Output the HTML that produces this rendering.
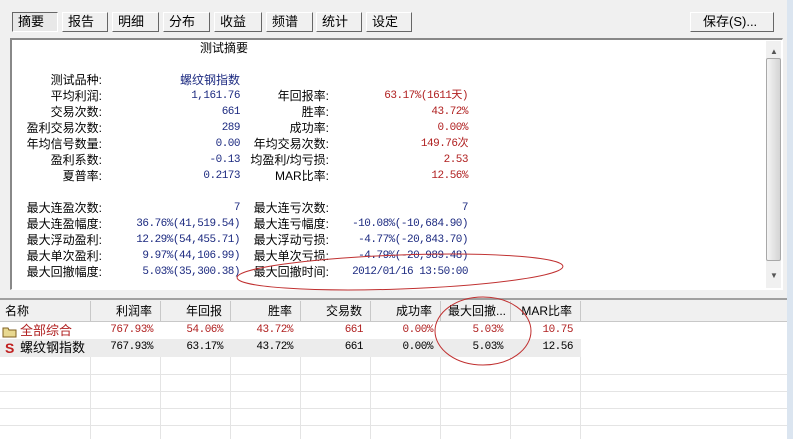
<!DOCTYPE html>
<html><head><meta charset="utf-8"><style>
*{margin:0;padding:0;box-sizing:border-box}
body{width:793px;height:439px;overflow:hidden;background:#f0f0f0;font-family:"Liberation Sans","Noto Sans CJK SC",sans-serif;font-size:12px;position:relative;color:#000}
.a{position:absolute;white-space:nowrap;line-height:16px}
.btn{position:absolute;top:12px;height:20px;background:#f0f0f0;border:1px solid;border-color:#fff #666 #666 #fff;text-align:left;padding-left:5px;line-height:17px;font-size:13px}
.lbl{position:absolute;text-align:right;white-space:nowrap;line-height:16px}
.n{font-family:"Liberation Mono","Noto Sans CJK SC",monospace;font-size:11px;letter-spacing:-0.5px;line-height:16px}
.b{color:#1c2a80}.r{color:#b02020}
.th{position:absolute;top:301px;height:20px;line-height:20px;text-align:right;padding-right:8px;border-right:1px solid #c8c8c8}
.td{position:absolute;height:17px;line-height:17px;text-align:right;padding-right:8px;font-family:"Liberation Mono","Noto Sans CJK SC",monospace;font-size:11px;letter-spacing:-0.5px}
</style></head><body>
<div class="btn" style="left:12px;width:46px;border-color:#666 #fff #fff #666;background:#e8e8e8">摘要</div>
<div class="btn" style="left:62px;width:46px">报告</div>
<div class="btn" style="left:112px;width:47px">明细</div>
<div class="btn" style="left:163px;width:47px">分布</div>
<div class="btn" style="left:214px;width:48px">收益</div>
<div class="btn" style="left:266px;width:47px">频谱</div>
<div class="btn" style="left:316px;width:46px">统计</div>
<div class="btn" style="left:366px;width:46px">设定</div>
<div class="btn" style="left:690px;width:84px;padding-left:12px">保存(S)...</div>
<div style="position:absolute;left:787px;top:0;width:6px;height:439px;background:#dbe5f0"></div>
<div style="position:absolute;left:10px;top:38px;width:773px;height:252px;background:#fff;border:1px solid;border-color:#888 #fff #fff #888;border-width:2px 1px 1px 2px"></div>
<div style="position:absolute;left:766px;top:41px;width:15px;height:247px;background:#f0f0f0"></div>
<div style="position:absolute;left:766px;top:58px;width:15px;height:203px;background:linear-gradient(90deg,#f4f4f4,#d4d4d4);border:1px solid #a8a8a8;border-radius:2px"></div>
<div class="a" style="left:770px;top:44px;font-size:8px;color:#555">▲</div>
<div class="a" style="left:770px;top:268px;font-size:8px;color:#555">▼</div>
<div class="a" style="left:200px;top:40px">测试摘要</div>
<div class="lbl" style="left:0;width:102px;top:72px">测试品种:<br>平均利润:<br>交易次数:<br>盈利交易次数:<br>年均信号数量:<br>盈利系数:<br>夏普率:<br><br>最大连盈次数:<br>最大连盈幅度:<br>最大浮动盈利:<br>最大单次盈利:<br>最大回撤幅度:</div>
<div class="lbl b" style="left:100px;width:140px;top:72px">螺纹钢指数</div>
<div class="lbl b n" style="left:100px;width:140px;top:88px">1,161.76<br>661<br>289<br>0.00<br>-0.13<br>0.2173<br><br>7<br>36.76%(41,519.54)<br>12.29%(54,455.71)<br>9.97%(44,106.99)<br>5.03%(35,300.38)</div>
<div class="lbl" style="left:200px;width:129px;top:72px"><br>年回报率:<br>胜率:<br>成功率:<br>年均交易次数:<br>均盈利/均亏损:<br>MAR比率:<br><br>最大连亏次数:<br>最大连亏幅度:<br>最大浮动亏损:<br>最大单次亏损:<br>最大回撤时间:</div>
<div class="lbl r n" style="left:330px;width:138px;top:88px">63.17%(1611天)<br>43.72%<br>0.00%<br>149.76次<br>2.53<br>12.56%</div>
<div class="lbl b n" style="left:330px;width:138px;top:200px">7<br>-10.08%(-10,684.90)<br>-4.77%(-20,843.70)<br>-4.79%(-20,989.48)<br>2012/01/16 13:50:00</div>
<div style="position:absolute;left:0;top:298px;width:787px;height:2px;background:#a0a0a0"></div>
<div style="position:absolute;left:0;top:300px;width:787px;height:139px;background:#fff"></div>
<div style="position:absolute;left:0;top:300px;width:787px;height:22px;background:#f0f0f0;border-bottom:1px solid #c8c8c8"></div>
<div class="th" style="left:0;width:91px;text-align:left;padding-left:5px">名称</div>
<div class="th" style="left:91px;width:70px">利润率</div>
<div class="th" style="left:161px;width:70px">年回报</div>
<div class="th" style="left:231px;width:70px">胜率</div>
<div class="th" style="left:301px;width:70px">交易数</div>
<div class="th" style="left:371px;width:70px">成功率</div>
<div class="th" style="left:441px;width:70px;padding-right:4px">最大回撤...</div>
<div class="th" style="left:511px;width:70px">MAR比率</div>
<div style="position:absolute;left:0;top:339px;width:581px;height:18px;background:#ececec"></div>
<svg style="position:absolute;left:0;top:322px" width="787" height="117">
<g stroke="#e4e4e4" stroke-width="1">
<line x1="0" y1="52.5" x2="787" y2="52.5"/><line x1="0" y1="69.5" x2="787" y2="69.5"/><line x1="0" y1="86.5" x2="787" y2="86.5"/><line x1="0" y1="103.5" x2="787" y2="103.5"/>
<line x1="90.5" y1="35" x2="90.5" y2="117"/><line x1="160.5" y1="35" x2="160.5" y2="117"/><line x1="230.5" y1="35" x2="230.5" y2="117"/><line x1="300.5" y1="35" x2="300.5" y2="117"/><line x1="370.5" y1="35" x2="370.5" y2="117"/><line x1="440.5" y1="35" x2="440.5" y2="117"/><line x1="510.5" y1="35" x2="510.5" y2="117"/><line x1="580.5" y1="35" x2="580.5" y2="117"/>
</g>
<path d="M3 6h5l1 2h7v7H3z" fill="#e8d890" stroke="#806020"/>
</svg>
<div class="a r" style="left:20px;top:323px;font-size:13px">全部综合</div>
<div class="a" style="left:5px;top:340px;font-size:14px;font-weight:bold;color:#c02020">S</div>
<div class="a" style="left:20px;top:340px;font-size:13px">螺纹钢指数</div>
<div class="td r" style="left:91px;width:70px;top:322px">767.93%</div>
<div class="td r" style="left:161px;width:70px;top:322px">54.06%</div>
<div class="td r" style="left:231px;width:70px;top:322px">43.72%</div>
<div class="td r" style="left:301px;width:70px;top:322px">661</div>
<div class="td r" style="left:371px;width:70px;top:322px">0.00%</div>
<div class="td r" style="left:441px;width:70px;top:322px">5.03%</div>
<div class="td r" style="left:511px;width:70px;top:322px">10.75</div>
<div class="td" style="left:91px;width:70px;top:339px">767.93%</div>
<div class="td" style="left:161px;width:70px;top:339px">63.17%</div>
<div class="td" style="left:231px;width:70px;top:339px">43.72%</div>
<div class="td" style="left:301px;width:70px;top:339px">661</div>
<div class="td" style="left:371px;width:70px;top:339px">0.00%</div>
<div class="td" style="left:441px;width:70px;top:339px">5.03%</div>
<div class="td" style="left:511px;width:70px;top:339px">12.56</div>
<svg style="position:absolute;left:0;top:0" width="793" height="439">
<g fill="none" stroke="#c03030" stroke-width="1">
<ellipse cx="400" cy="272" rx="163" ry="17" transform="rotate(-2 400 272)"/>
<ellipse cx="483" cy="331" rx="48" ry="34"/>
</g>
</svg>
</body></html>
